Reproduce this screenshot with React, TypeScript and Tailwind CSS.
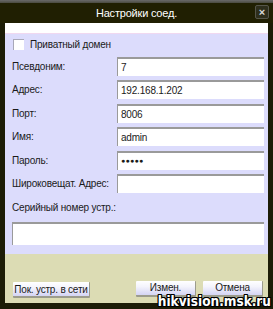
import React from 'react';

// поля формы
const fields = [
  { label: 'Псевдоним:', value: '7' },
  { label: 'Адрес:', value: '192.168.1.202' },
  { label: 'Порт:', value: '8006' },
  { label: 'Имя:', value: 'admin' },
  { label: 'Пароль:', value: '●●●●●', pwd: true },
  { label: 'Широковещат. Адрес:', value: '' },
];

function Btn({ children, w }: { children: React.ReactNode; w: string }) {
  return (
    <button
      className={`${w} h-[16px] whitespace-nowrap text-[10px] tracking-[-0.2px] leading-[13px] text-[#1a1a1a] bg-[linear-gradient(#ffffff,#f4f4fc_40%,#d4d4f4)] border-b-[2px] border-r-[1px] border-[#9c9c8c] rounded-[1px]`}
    >
      {children}
    </button>
  );
}

export default function App() {
  return (
    <div className="relative w-[273px] h-[309px] bg-[#1c1c06] flex flex-col font-['Liberation_Sans',Arial,sans-serif] overflow-hidden">
      {/* верхняя полоса */}
      <div className="h-[3px] bg-[linear-gradient(#6a6a6a,#4a4a40)]" />

      {/* заголовок */}
      <div className="relative h-[20px] flex items-center justify-center bg-[#201f02]">
        <span className="text-white text-[11px] tracking-[-0.2px] leading-none">Настройки соед.</span>
        <div className="absolute right-[4px] top-[2px] w-[14px] h-[14px] rounded-[2px] bg-[#2e2e1c] border border-[#55554a] flex items-center justify-center">
          <span className="text-[#d8d8d8] text-[11px] leading-none font-bold">×</span>
        </div>
      </div>

      <div className="mx-[5px] flex flex-col">
        <div className="h-[10px] bg-white" />
        <div className="h-[1px] bg-[#f0d8f0]" />

        {/* сиреневая область */}
        <div className="h-[220px] bg-[#dcdcfc] flex flex-col pl-[7px] pr-[4px] text-[10px] tracking-[-0.2px] text-[#1a1a1a]">
          <label className="flex items-center mt-[4px] ml-[1px] h-[12px] gap-[6px]">
            <span className="w-[11px] h-[11px] bg-white border-t border-l border-[#a8a8b8]" />
            <span>Приватный домен</span>
          </label>

          <div className="flex flex-col gap-[4.4px] mt-[7px]">
            {fields.map((f) => (
              <div key={f.label} className="flex items-center h-[19px]">
                <span className="w-[105px] whitespace-nowrap">{f.label}</span>
                <div className="flex-1 h-[19px] bg-white border-t-[2px] border-l-[1px] border-[#9a9a9a] flex items-center pl-[3px]">
                  <span className={f.pwd ? 'text-[7px] tracking-[0.3px]' : ''}>{f.value}</span>
                </div>
              </div>
            ))}
          </div>

          <div className="mt-[8px] h-[13px] leading-[13px]">Серийный номер устр.:</div>
          <div className="mt-[8px] h-[23px] bg-white border-t-[2px] border-l-[1px] border-[#9a9a9a]" />
        </div>

        {/* нижняя панель */}
        <div className="h-[49px] bg-[#dcdcb4] flex items-end pb-[5px] pl-[8px]">
          <Btn w="w-[77px]">Пок. устр. в сети</Btn>
          <div className="ml-[46px]">
            <Btn w="w-[60px]">Измен.</Btn>
          </div>
          <div className="ml-[7px]">
            <Btn w="w-[60px]">Отмена</Btn>
          </div>
        </div>
      </div>

      {/* водяной знак */}
      <div className="absolute right-[2px] bottom-[0px] text-white font-['DejaVu_Sans_Condensed','DejaVu_Sans',sans-serif] font-bold text-[13.5px] leading-[16px] [text-shadow:1px_0_0_#000,-1px_0_0_#000,0_1px_0_#000,0_-1px_0_#000,1px_1px_0_#000,-1px_-1px_0_#000,1px_-1px_0_#000,-1px_1px_0_#000]">
        hikvision.msk.ru
      </div>
    </div>
  );
}
